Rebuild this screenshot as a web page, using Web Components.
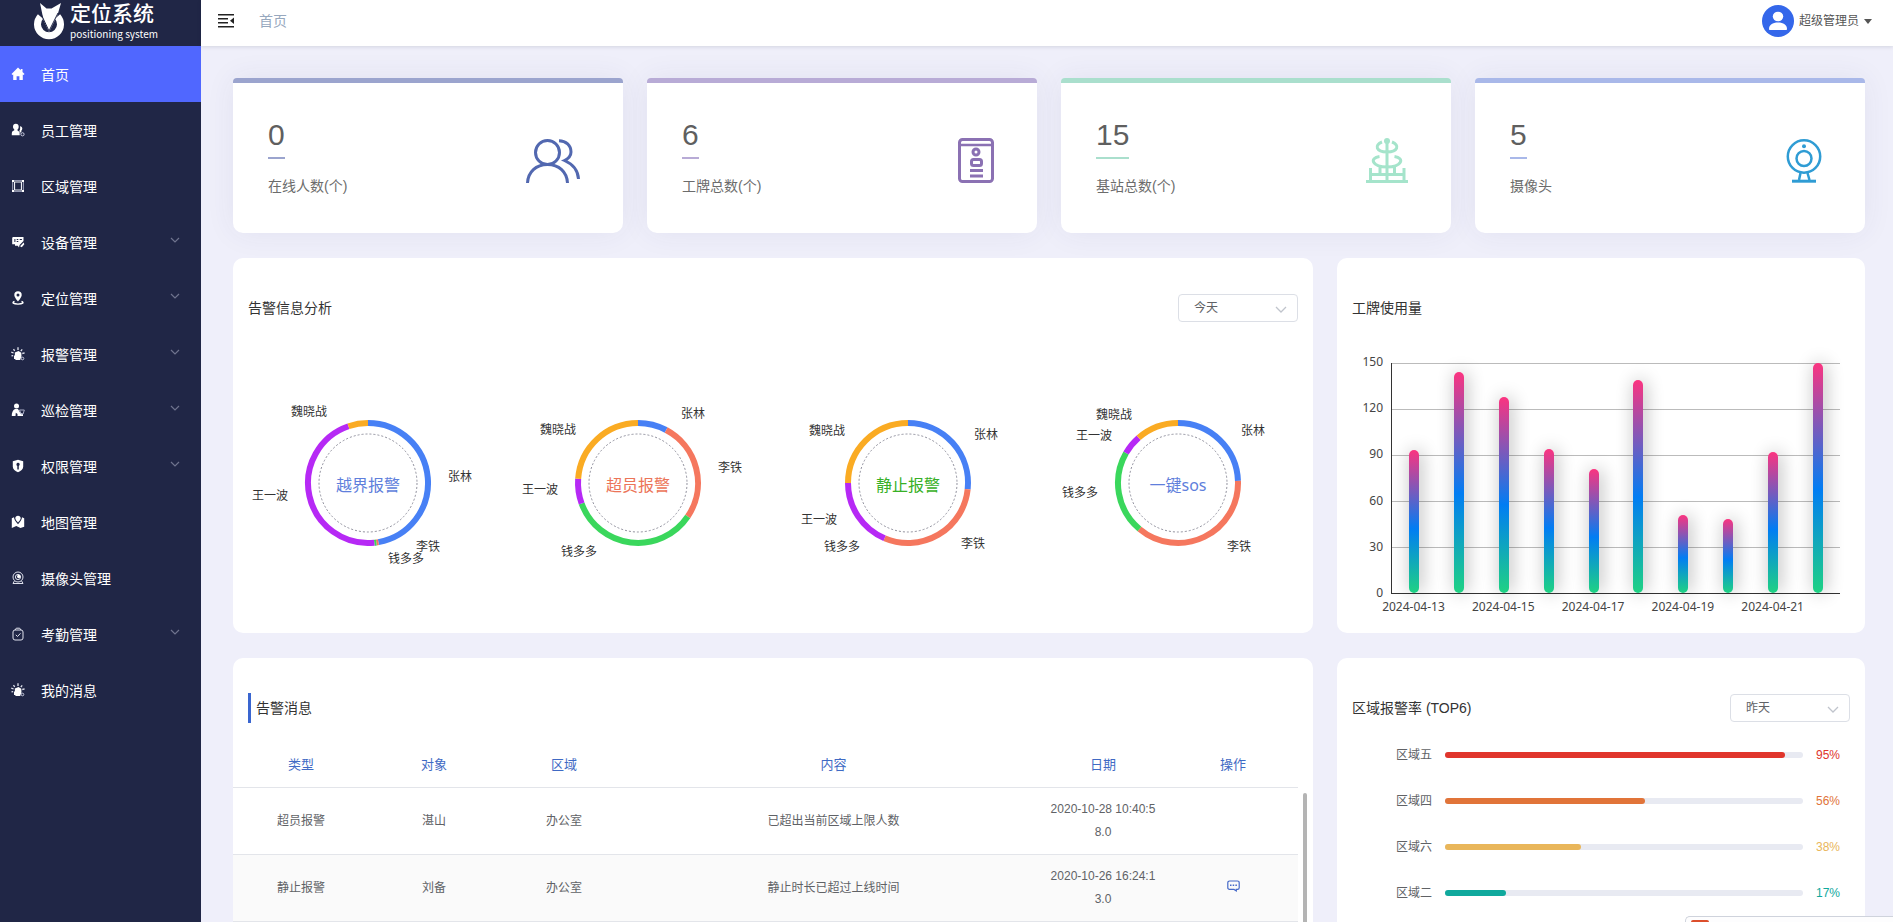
<!DOCTYPE html>
<html lang="zh-CN">
<head>
<meta charset="utf-8">
<meta name="viewport" content="width=device-width, initial-scale=1">
<title>定位系统</title>
<style>
  html, body { margin: 0; height: 100%; }
  body {
    overflow: hidden;
    background: #efeffa;
    color: #606266;
    font: 14px/20px "Liberation Sans", "Noto Sans CJK SC", sans-serif;
  }
</style>
</head>
<body>
<app-shell>
  <side-nav slot="nav"></side-nav>
  <top-bar slot="top" user="超级管理员">首页</top-bar>
  <stat-row>
    <stat-card icon="people" value="0" tone="#9ba4ce">在线人数(个)</stat-card>
    <stat-card icon="badge" value="6" tone="#b8abd6">工牌总数(个)</stat-card>
    <stat-card icon="tower" value="15" tone="#aadfcd">基站总数(个)</stat-card>
    <stat-card icon="webcam" value="5" tone="#a9b8e9">摄像头</stat-card>
  </stat-row>
  <panel-grid>
    <info-panel>
      <span slot="title">告警信息分析</span>
      <period-select slot="tools" label="告警信息时间范围" value="今天"></period-select>
      <ring-group></ring-group>
    </info-panel>
    <info-panel>
      <span slot="title">工牌使用量</span>
      <bar-chart></bar-chart>
    </info-panel>
    <info-panel marked>
      <span slot="title">告警消息</span>
      <alarm-table></alarm-table>
    </info-panel>
    <info-panel>
      <span slot="title">区域报警率 (TOP6)</span>
      <period-select slot="tools" label="区域报警率时间范围" value="昨天"></period-select>
      <area-rate name="区域五" value="95" tone="#e0352c"></area-rate>
      <area-rate name="区域四" value="56" tone="#e17439"></area-rate>
      <area-rate name="区域六" value="38" tone="#e9b65a"></area-rate>
      <area-rate name="区域二" value="17" tone="#10a99d"></area-rate>
    </info-panel>
  </panel-grid>
  <corner-popup slot="overlay"></corner-popup>
</app-shell>

<script>
const svg = (w, h, body, box) =>
  `<svg width="${w}" height="${h}" viewBox="${box || `0 0 ${w} ${h}`}" aria-hidden="true">${body}</svg>`;

function define(name, render) {
  customElements.define(name, class extends HTMLElement {
    constructor() {
      super();
      this.attachShadow({ mode: "open" });
    }
    connectedCallback() {
      this.shadowRoot.innerHTML = render(this);
    }
  });
}

/* ---------- frame ---------- */
define("app-shell", () => `
  <style>
    :host { display: grid; grid-template: 46px 1fr / 201px 1fr; height: 100vh; }
    ::slotted([slot=nav]) { grid-row: 1 / 3; }
    ::slotted([slot=top]) { z-index: 1; }
    main {
      display: flex; flex-direction: column; gap: 25px;
      padding: 32px 28px 0 32px; overflow: hidden; min-width: 0;
    }
  </style>
  <slot name="nav"></slot>
  <slot name="top"></slot>
  <main><slot></slot></main>
  <slot name="overlay"></slot>`);

const NAV_ICONS = {
  home: `<path fill="#fff" d="M7 .5 .5 7l1 1 .7-.5V13h3.400V9.200h2.800V13h3.400V7.500l.7.500 1-1-2-2V2H9.800v1.300z"/>`,
  staff: `<path fill="#fff" d="M4.800.8c1.900 0 2.900 1.300 2.900 3 0 1.200-.5 2.200-1.200 2.800v1l1.500.9c.6.5.7 2 .7 3.800H.8c0-2.200 0-3.500.8-4.100l1.700-.9v-.9C2.400 5.700 2 4.900 2 3.800c0-1.700 1-3 2.800-3zM9 3.300c1.500 0 2.300 1 2.300 2.300 0 .9-.4 1.600-.9 2l.2 1c-1 .3-1.600 1.200-1.400 2.500L8.400 7.800c.5-.7.8-1.600.8-2.700z"/><circle cx="11.500" cy="11.300" r="1.600" fill="none" stroke="#c9cce0"/>`,
  area: `<path fill="none" stroke="#9094ae" d="M1.500 1.500h11v11h-11z"/><path fill="none" stroke="#f0f1f8" stroke-width="1.200" d="M3.500 3h7v8h-7z"/><path fill="#fff" d="M1 1h2v2H1zM11 1h2v2h-2zM1 11h2v2H1zM11 11h2v2h-2z"/>`,
  device: `<path fill="#fff" d="M2 2h10.500v4L8.600 10 8 12.500l-1.300-1.700H4V9.300H1.200V2.800zM3.400 4v3h1V4zm2.300 0v1h1.600V4zM5.700 6v1h1.600V6zM8.700 4v1h2.200V4z" fill-rule="evenodd"/><path fill="#fff" d="m9 11.200 3.700-3.800.6 1.800-2.500 3z"/>`,
  place: `<path fill="#fff" fill-rule="evenodd" d="M7 .3a3.700 3.700 0 0 1 3.700 3.700C10.700 6.500 7 10.400 7 10.400S3.300 6.500 3.300 4A3.700 3.700 0 0 1 7 .3zm0 2.200a1.500 1.500 0 1 0 0 3 1.500 1.500 0 0 0 0-3z"/><path fill="none" stroke="#fff" stroke-width="1.400" d="M3.500 10.300c-3 1.200-1.200 2.800 3.500 2.800s6.500-1.600 3.500-2.800"/>`,
  alarm: `<path fill="#fff" d="M3.800 5.500 7.500 4l2.800 1.800.2 3.500-1.300 3.700H4.400V12H3V8.500h.9z"/><path stroke="#e4e6f0" stroke-width="1.300" d="m3.700 3.900-1.200-1.700M7 3V.3M9.800 4.100l1.400-1.700M2.600 6 .3 5.200M11.300 6.500l2.300-.6M2.200 8.600l-1.700.3"/><circle cx="11.500" cy="11.500" r="1.300" fill="none" stroke="#c9cce0"/>`,
  patrol: `<circle cx="5.500" cy="3" r="2.500" fill="#fff"/><path fill="#fff" d="M4 6h3l2 3.500 3 1.500v2H6.500v-2L4.800 9.800 4.500 13H.8c-.2-3 1-6 3.200-7z"/><path fill="none" stroke="#a9adc6" d="M8.500 7h4.800l-1.200 4H10z"/>`,
  shield: `<path fill="#fff" fill-rule="evenodd" d="M7 .8 12.200 2.300v5.500c0 2.600-2.400 4.400-5.200 5.400C4.200 12.200 1.800 10.400 1.800 7.800V2.300zM7 3.800a1.700 1.700 0 0 0-.7 3.200v3.400h1.500V7A1.700 1.700 0 0 0 7 3.800z"/>`,
  map: `<path fill="#fff" d="M.8 3.200 3 2.300c0 2 1.500 4.400 4 6.900 2.500-2.500 4-4.900 4-6.900l2.200.9v8.500L9.500 13 5.300 11 .8 13zM7 .8c1.600 0 2.700 1.200 2.700 2.500 0 1-1.200 2.600-2.700 4.200C5.500 5.900 4.300 4.300 4.300 3.300 4.300 2 5.400.8 7 .8z"/>`,
  camera: `<g fill="none" stroke="#dfe1ed"><circle cx="7" cy="6" r="5"/><circle cx="7" cy="6" r="2.600"/><path d="M3.400 10 2 12.500h10L10.600 10"/></g><circle cx="7.700" cy="5.500" r="1.700" fill="#fff"/>`,
  clock: `<g fill="none" stroke="#dfe1ed"><rect x="2" y="3" width="10" height="10" rx="2"/><path d="M4 3 5.300 1.200h3.400L10 3M4.800 7.800l1.700 1.700 3-3.200"/></g>`
};

define("side-nav", () => {
  const items = [
    ["首页", "home"], ["员工管理", "staff"], ["区域管理", "area"], ["设备管理", "device", 1],
    ["定位管理", "place", 1], ["报警管理", "alarm", 1], ["巡检管理", "patrol", 1],
    ["权限管理", "shield", 1], ["地图管理", "map"], ["摄像头管理", "camera"],
    ["考勤管理", "clock", 1], ["我的消息", "alarm"]
  ];
  return `
  <style>
    :host { display: block; background: #202646; color: #fff; }
    .brand {
      display: flex; align-items: center; justify-content: center; gap: 6px;
      height: 46px; box-sizing: border-box; padding: 0 9px 4px 0;
    }
    .brand strong { display: block; font: 500 21px/24px "Liberation Sans", "Noto Sans CJK SC", sans-serif; }
    .brand small { display: block; font: 10px/15px "Noto Sans CJK SC", sans-serif; }
    ul { list-style: none; margin: 0; padding: 0; }
    a {
      display: flex; align-items: center; height: 56px; box-sizing: border-box;
      padding: 2px 21px 0 11px; color: inherit; text-decoration: none;
    }
    a span { flex: 1; margin-left: 16px; }
    a svg { margin-bottom: 2px; }
    a span + svg { margin-bottom: 6px; }
    a[aria-current] { background: #5067ff; }
  </style>
  <div class="brand">
    ${svg(30, 40, `<path fill="none" stroke="#fff" stroke-width="7" d="M6.500 15.500a11.500 11.500 0 1 0 17 0"/><path fill="#fff" d="M6 2l6.500 5.500h5L27 2l-3.500 12L15 31 9.500 19z"/><path fill="none" stroke="#202646" stroke-width="1" d="m7.500 14 7.500 16 9-18"/>`)}
    <div><strong>定位系统</strong><small>positioning system</small></div>
  </div>
  <nav><ul>${items.map(([text, icon, sub], i) => `
    <li><a href="#"${i ? "" : ' aria-current="page"'}>${svg(14, 14, NAV_ICONS[icon])}<span>${text}</span>${
      sub ? svg(10, 6, `<path fill="none" stroke="#6f738e" stroke-width="1.200" d="m1 1 4 4 4-4"/>`) : ""}</a></li>`).join("")}
  </ul></nav>`;
});

define("top-bar", el => `
  <style>
    :host {
      display: flex; align-items: center; justify-content: space-between;
      padding: 0 21px 4px 17px; background: #fff; box-shadow: 0 1px 4px rgba(0, 21, 41, .12);
    }
    div { display: flex; align-items: center; gap: 25px; }
    button { display: flex; align-items: center; padding: 0; border: 0; background: none; font: inherit; color: #555; cursor: pointer; }
    .user { gap: 5px; font-size: 12px; }
    a { color: #97a8be; text-decoration: none; }
  </style>
  <div>
    <button aria-label="收起菜单">${svg(16, 14, `<path fill="#222" d="M0 0h16v1.500H0zM0 4h10v1.500H0zM0 8h10v1.500H0zM0 12h16v1.500H0zM16 3.500v6.500L12 6.800z"/>`)}</button>
    <a href="#"><slot></slot></a>
  </div>
  <button class="user">
    ${svg(32, 32, `<circle cx="16" cy="16" r="16" fill="#3467ea"/><ellipse cx="16" cy="11.500" rx="5.200" ry="4.800" fill="#fff"/><path fill="#fff" d="M7 24c0-4 3.500-6.500 9-6.500s9 2.500 9 6.500c0 .7-.5 1-1 1H8c-.5 0-1-.3-1-1z"/>`)}
    ${el.getAttribute("user")}
    ${svg(8, 5, `<path fill="#555" d="M0 0h8L4 5z"/>`)}
  </button>`);

/* ---------- statistic cards ---------- */
const STAT_ICONS = {
  people: svg(54, 44, `<g fill="none" stroke="#5268b0" stroke-width="3"><ellipse cx="21.500" cy="13.500" rx="12" ry="12"/><path d="M1.500 44C2 33 10 25.500 21.500 25.500S41 33 41.500 44M33 1.700c7 0 12 4.500 12 11.300 0 4-2.500 6.500-6.500 8.500 8 3.500 13.500 10 14 18.500"/></g>`),
  badge: svg(36, 45, `<g fill="none" stroke="#8b71b3" stroke-width="3"><rect x="1.500" y="1.500" width="33" height="42" rx="3"/><path d="M2 7h32" stroke-width="2.500"/><circle cx="18" cy="14" r="3"/><rect x="13.500" y="21.500" width="10" height="6" rx="2"/><path d="M12 32.500h13M12 38h13"/></g>`),
  tower: svg(42, 45, `<g fill="none" stroke="#a5e4cb" stroke-width="3"><path d="M21 2v41M0 43.500h42M4.500 43V30M38 43V30M5 36.500h33M14 29v8M28.500 29v8M16 4c-8 3-6 10 5 10s13-7 5-10M13.500 18.500C3 20 6 29 21 29s18-9 7.500-10.500"/></g><ellipse cx="21" cy="3" rx="3" ry="3" fill="#a5e4cb"/>`),
  webcam: svg(36, 44, `<g fill="none" stroke="#2f9cd4" stroke-width="2.500"><circle cx="18" cy="17.500" r="16.200"/><circle cx="18" cy="19.500" r="7.500"/><path d="m14.500 34-1.500 7M21.500 34l2 7"/><path stroke-width="3" d="M6 42.200h24"/></g><circle cx="18" cy="7.200" r="2" fill="#2f9cd4"/>`)
};

define("stat-row", () => `
  <style>:host { display: grid; grid-template-columns: repeat(4, 1fr); gap: 24px; }</style>
  <slot></slot>`);

define("stat-card", el => `
  <style>
    :host {
      display: flex; align-items: center; justify-content: space-between;
      height: 155px; box-sizing: border-box; padding: 5px 43px 0 35px;
      border-top: 5px solid ${el.getAttribute("tone")}; border-radius: 4px 4px 10px 10px;
      background: #fff; box-shadow: 0 0 30px rgba(60, 50, 110, .07); color: #6c6c6c;
    }
    div { padding-bottom: 8px; }
    b {
      display: table; padding-bottom: 5px; border-bottom: 2px solid ${el.getAttribute("tone")};
      font-weight: 400; font-size: 30px; line-height: 34px; color: #5f5f5f;
    }
    span { display: block; margin-top: 17px; }
  </style>
  <div><b>${el.getAttribute("value")}</b><span><slot></slot></span></div>
  ${STAT_ICONS[el.getAttribute("icon")]}`);

/* ---------- panels ---------- */
define("panel-grid", () => `
  <style>
    :host { display: grid; grid-template-columns: minmax(0, 45fr) minmax(0, 22fr); gap: 25px 24px; }
    ::slotted(*) { min-height: 375px; }
  </style>
  <slot></slot>`);

define("info-panel", () => `
  <style>
    :host { display: block; border-radius: 10px; background: #fff; }
    header {
      display: flex; align-items: center; justify-content: space-between;
      padding: 35px 15px 0; height: 30px; color: #333;
    }
    :host([marked]) h2 { border-left: 3px solid #3a66d0; padding-left: 5px; }
    h2 { margin: 0; font: inherit; line-height: 30px; }
  </style>
  <header><h2><slot name="title"></slot></h2><slot name="tools"></slot></header>
  <slot></slot>`);

define("period-select", el => `
  <style>
    :host { display: grid; align-items: center; width: 120px; height: 28px; }
    select, svg { grid-area: 1 / 1; }
    select {
      appearance: none; width: 100%; height: 28px; padding: 0 30px 0 15px;
      border: 1px solid #dcdfe6; border-radius: 4px; background: #fff;
      color: #606266; font: inherit; font-size: 12px;
    }
    svg { justify-self: end; margin: 3px 11px 0 0; pointer-events: none; }
  </style>
  <select aria-label="${el.getAttribute("label")}">
    ${["今天", "昨天"].map(d => `<option${d === el.getAttribute("value") ? " selected" : ""}>${d}</option>`).join("")}
  </select>
  ${svg(12, 8, `<path fill="none" stroke="#c0c4cc" stroke-width="1.300" d="m1 1 5 5 5-5"/>`)}`);

/* Ring chart: segments are [end angle, colour], labels are [text, dx, dy] from the centre. */
const BLUE = "#4780f5", RED = "#f5775e", GREEN = "#3ad75c", PURPLE = "#b629f5", ORANGE = "#faab23";
const RINGS = [
  { name: "越界报警", color: "#5f7fdc",
    segs: [[170, BLUE], [172, RED], [174, GREEN], [341, PURPLE], [360, ORANGE]],
    labels: [["魏晓战", -59, -71], ["张林", 92, -6], ["李铁", 60, 64], ["钱多多", 38, 76], ["王一波", -98, 13]] },
  { name: "超员报警", color: "#ec7458",
    segs: [[28, BLUE], [124, RED], [250, GREEN], [274, PURPLE], [360, ORANGE]],
    labels: [["魏晓战", -80, -53], ["张林", 55, -69], ["李铁", 92, -15], ["钱多多", -59, 69], ["王一波", -98, 7]] },
  { name: "静止报警", color: "#37b026",
    segs: [[96, BLUE], [203, RED], [270, PURPLE], [360, ORANGE]],
    labels: [["魏晓战", -81, -52], ["张林", 78, -48], ["李铁", 65, 61], ["钱多多", -66, 64], ["王一波", -89, 37]] },
  { name: "一键sos", color: "#5f7fdc",
    segs: [[88, BLUE], [220, RED], [300, GREEN], [319, PURPLE], [360, ORANGE]],
    labels: [["魏晓战", -64, -68], ["张林", 75, -52], ["李铁", 61, 64], ["钱多多", -98, 10], ["王一波", -84, -47]] }
];

function ringSvg({ name, segs, labels }) {
  const R = 60;
  const at = deg => {
    const a = deg * Math.PI / 180;
    return `${(R * Math.sin(a)).toFixed(2)} ${(-R * Math.cos(a)).toFixed(2)}`;
  };
  let from = 0;
  const arcs = segs.map(([to, c]) => {
    const d = `M${at(from)}A${R} ${R} 0 ${to - from > 180 ? 1 : 0} 1 ${at(to)}`;
    from = to;
    return `<path d="${d}" stroke="${c}"/>`;
  }).join("");
  return `<svg width="240" height="190" viewBox="-120 -95 240 190" role="img" aria-label="${name}">
    <g fill="none" stroke-width="6">${arcs}</g>
    <circle r="49" fill="none" stroke="#8f8f9c" stroke-width="1" stroke-dasharray="2 2"/>
    <text class="name" y="8">${name}</text>
    ${labels.map(([t, x, y]) => `<text x="${x}" y="${y + 4}">${t}</text>`).join("")}
  </svg>`;
}

define("ring-group", () => `
  <style>
    :host { display: grid; grid-template-columns: repeat(4, 1fr); justify-items: center; padding-top: 65px; }
    svg { overflow: visible; }
    text { font-size: 12px; fill: #333; text-anchor: middle; }
    .name { font-size: 16px; font-family: "Noto Sans", "Noto Sans CJK SC", sans-serif; }
    ${RINGS.map((r, i) => `svg:nth-of-type(${i + 1}) .name { fill: ${r.color}; }`).join("")}
  </style>
  ${RINGS.map(ringSvg).join("")}`);

define("bar-chart", () => {
  const values = [93, 144, 128, 94, 81, 139, 51, 48, 92, 150];
  return `
  <style>
    :host {
      display: grid; grid-template: 231px auto / 30px 1fr; column-gap: 8px;
      padding: 40px 25px 0 16px; color: #444; font: 12px/16px "Noto Sans", sans-serif;
    }
    .scale { display: flex; flex-direction: column; justify-content: space-between; margin: -9px 0 -7px; text-align: right; }
    .plot {
      border: solid #333; border-width: 0 0 1px 1px; box-sizing: border-box;
      background: repeating-linear-gradient(#bbb 0 1px, transparent 1px 46px);
    }
    .plot, .days { display: grid; grid-template-columns: repeat(10, minmax(0, 1fr)); justify-items: center; align-items: end; }
    i {
      width: 10px; border-radius: 5px;
      background: linear-gradient(#fb3480, #017df3 55%, #1fd283);
      box-shadow: 2px 0 18px rgba(0, 0, 0, .32);
    }
    .days { grid-column: 2; padding-top: 5px; }
    .days span { white-space: nowrap; }
  </style>
  <div class="scale">${[150, 120, 90, 60, 30, 0].map(n => `<span>${n}</span>`).join("")}</div>
  <div class="plot">${values.map(v => `<i style="height:${v / 1.5}%"></i>`).join("")}</div>
  <div class="days">${values.map((_, k) => `<span>${k % 2 ? "" : "2024-04-" + (13 + k)}</span>`).join("")}</div>`;
});

define("alarm-table", () => `
  <style>
    :host { display: flex; gap: 5px; padding: 18px 6px 0 0; }
    table { flex: 1; border-collapse: collapse; table-layout: fixed; font-size: 12px; line-height: 23px; text-align: center; }
    col { width: 130px; }
    col.type { width: 136px; }
    col.text { width: auto; }
    th { padding: 12px 10px 11px; font-size: 13px; font-weight: 400; color: #3f6ac4; }
    td { height: 46px; padding: 10px; word-break: break-all; }
    tr { border-bottom: 1px solid #e3e5ea; }
    tbody tr:nth-child(even) { background: #fafafa; }
    .bar { width: 4px; margin-top: 52px; border-radius: 2px 2px 0 0; background: #b4b4b4; }
    button { padding: 0; border: 0; background: none; line-height: 0; cursor: pointer; }
  </style>
  <table>
    <colgroup><col class="type"><col><col><col class="text"><col><col></colgroup>
    <thead><tr><th>类型</th><th>对象</th><th>区域</th><th>内容</th><th>日期</th><th>操作</th></tr></thead>
    <tbody>
      <tr><td>超员报警</td><td>湛山</td><td>办公室</td><td>已超出当前区域上限人数</td><td>2020-10-28 10:40:58.0</td><td></td></tr>
      <tr><td>静止报警</td><td>刘备</td><td>办公室</td><td>静止时长已超过上线时间</td><td>2020-10-26 16:24:13.0</td><td><button aria-label="处理">${svg(13, 12, `<path fill="none" stroke="#4569c8" stroke-width="1.200" d="M2.500 1h8A1.700 1.700 0 0 1 12.200 2.700v5A1.700 1.700 0 0 1 10.500 9.400H9.300v1.500L7 9.400H2.500A1.700 1.700 0 0 1 .8 7.700v-5A1.700 1.700 0 0 1 2.500 1z"/><path stroke="#4569c8" stroke-width="1.500" d="M3 5.200h1.500m1.200 0h1.500m1.200 0h1.500"/>`)}</button></td></tr>
    </tbody>
  </table>
  <div class="bar"></div>`);

define("area-rate", el => `
  <style>
    :host {
      display: grid; grid-template-columns: 36px 1fr 24px; gap: 13px; align-items: center;
      height: 46px; padding: 0 25px 0 59px; font-size: 12px;
    }
    :host(:nth-of-type(1)) { margin-top: 9px; }
    .track { height: 6px; border-radius: 3px; background: #e8eaf2; }
    .fill { width: ${el.getAttribute("value")}%; height: 6px; border-radius: 3px; background: ${el.getAttribute("tone")}; }
    output { color: ${el.getAttribute("tone")}; text-align: right; }
  </style>
  <span>${el.getAttribute("name")}</span>
  <div class="track"><div class="fill"></div></div>
  <output>${el.getAttribute("value")}%</output>`);

/* Top edge of a tool window that peeks in at the corner of the screen. */
define("corner-popup", () => `
  <style>
    :host {
      position: absolute; right: 0; bottom: 0; z-index: 2; width: 208px; height: 6px; box-sizing: border-box;
      border: 1px solid #cfd3dc; border-width: 1px 0 0 1px; border-radius: 5px 0 0 0; background: #fdfdfe;
    }
    i { display: block; width: 18px; height: 2px; margin: 3px 0 0 5px; border-radius: 4px 4px 0 0; background: #dc4f2c; }
  </style>
  <i></i>`);
</script>
</body>
</html>
